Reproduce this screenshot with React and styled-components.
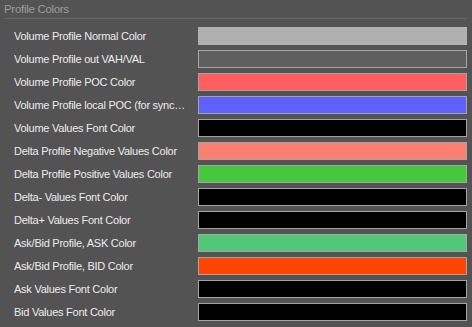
import React from "react";
import styled, { createGlobalStyle } from "styled-components";

const Global = createGlobalStyle`
  html, body { margin: 0; padding: 0; background: #535353; }
  body { font-family: "Liberation Sans", Arial, sans-serif; }
`;

const Panel = styled.div`
  width: 472px;
  height: 327px;
  background: #535353;
  box-sizing: border-box;
  padding: 0 5px 0 4px;
  overflow: hidden;
`;

const Header = styled.div`
  height: 19px;
  line-height: 18px;
  font-size: 11.5px;
  letter-spacing: -0.3px;
  color: #9c9c9c;
  border-bottom: 1px solid #676767;
  box-sizing: border-box;
`;

const List = styled.div`
  display: flex;
  flex-direction: column;
  gap: 5px;
  padding: 8px 0 0 10px;
`;

const Row = styled.div`
  display: grid;
  grid-template-columns: 184px 269px;
  align-items: center;
  height: 18px;
`;

const Label = styled.div`
  font-size: 11px;
  letter-spacing: -0.25px;
  color: #ececec;
  white-space: nowrap;
  overflow: hidden;
  text-overflow: ellipsis;
  padding-right: 8px;
`;

const Swatch = styled.div`
  height: 18px;
  box-sizing: border-box;
  border: 1px solid ${(p) => p.$border || "#a4a4a4"};
  background: ${(p) => p.$color};
`;

const rows = [
  ["Volume Profile Normal Color", "#b0b0b0", "#b0b0b0"],
  ["Volume Profile out VAH/VAL", "#5f5f5f"],
  ["Volume Profile POC Color", "#ff5f5f"],
  ["Volume Profile local POC (for synchronized chart)", "#6060ff"],
  ["Volume Values Font Color", "#000000"],
  ["Delta Profile Negative Values Color", "#fa8072"],
  ["Delta Profile Positive Values Color", "#46c83c"],
  ["Delta- Values Font Color", "#000000"],
  ["Delta+ Values Font Color", "#000000"],
  ["Ask/Bid Profile, ASK Color", "#50c878"],
  ["Ask/Bid Profile, BID Color", "#ff4500"],
  ["Ask Values Font Color", "#000000"],
  ["Bid Values Font Color", "#000000"],
];

export default function App() {
  return (
    <>
      <Global />
      <Panel>
        <Header>Profile Colors</Header>
        <List>
          {rows.map(([label, color, border]) => (
            <Row key={label}>
              <Label>{label}</Label>
              <Swatch $color={color} $border={border} />
            </Row>
          ))}
        </List>
      </Panel>
    </>
  );
}
